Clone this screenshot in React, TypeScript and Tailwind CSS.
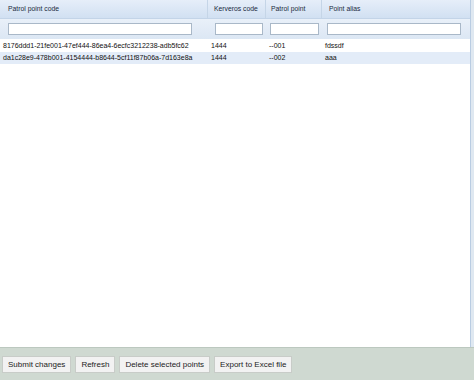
import React from "react";

const rows = [
  { code: "8176ddd1-21fe001-47ef444-86ea4-6ecfc3212238-adb5fc62", k: "1444", p: "--001", a: "fdssdf" },
  { code: "da1c28e9-478b001-4154444-b8644-5cf11f87b06a-7d163e8a", k: "1444", p: "--002", a: "aaa" },
];

export default function App() {
  const font = { fontFamily: '"Liberation Sans", Arial, sans-serif' };
  return (
    <div className="w-[474px] h-[380px] flex flex-col bg-white overflow-hidden" style={font}>
      <div className="h-[347px] flex bg-[#dfe8f1]">
        <div className="w-[471px] bg-white border-r border-[#b9cce2] flex flex-col">
          <div className="flex h-[19px] bg-gradient-to-b from-[#e6eef9] to-[#d1e0f2] border-b border-[#c3d4e8] text-[6.8px] text-[#1a2a40]">
            <div className="w-[208px] border-r border-[#c5d5e7] pl-[8px] flex items-center">Patrol point code</div>
            <div className="w-[58px] border-r border-[#c5d5e7] pl-[6px] flex items-center">Kerveros code</div>
            <div className="w-[56px] border-r border-[#c5d5e7] pl-[5px] flex items-center">Patrol point</div>
            <div className="flex-1 pl-[7px] flex items-center">Point alias</div>
          </div>
          <div className="flex h-[20px] bg-gradient-to-b from-[#e9f0f9] to-[#dce7f4] items-center">
            <div className="w-[208px] pl-[8px] pr-[16px]"><div className="h-[12px] bg-white border border-[#a9b8c8]" /></div>
            <div className="w-[58px] pl-[7px] pr-[3px]"><div className="h-[12px] bg-white border border-[#a9b8c8]" /></div>
            <div className="w-[56px] pl-[4px] pr-[3px]"><div className="h-[12px] bg-white border border-[#a9b8c8]" /></div>
            <div className="flex-1 pl-[5px] pr-[9px]"><div className="h-[12px] bg-white border border-[#a9b8c8]" /></div>
          </div>
          {rows.map((r, i) => (
            <div key={i} className={`flex h-[12px] items-center text-[7px] text-[#111] ${i === 1 ? "bg-[#e3ecf8]" : "bg-white"} ${i === 0 ? "mt-[1px]" : ""}`}>
              <div className="w-[208px] pl-[3px] whitespace-nowrap">{r.code}</div>
              <div className="w-[58px] pl-[3px]">{r.k}</div>
              <div className="w-[56px] pl-[3px]">{r.p}</div>
              <div className="flex-1 pl-[3px]">{r.a}</div>
            </div>
          ))}
        </div>
      </div>
      <div className="flex-1 bg-[#cfd9d1] border-t border-[#bcc8bf] flex items-start pt-[8px] pl-[2px] gap-[4px]">
        {["Submit changes", "Refresh", "Delete selected points", "Export to Excel file"].map((t) => (
          <div key={t} className="h-[17px] px-[5px] bg-[#f2f2f2] border border-[#c8ccc8] text-[8px] text-[#222] flex items-center">
            {t}
          </div>
        ))}
      </div>
    </div>
  );
}
